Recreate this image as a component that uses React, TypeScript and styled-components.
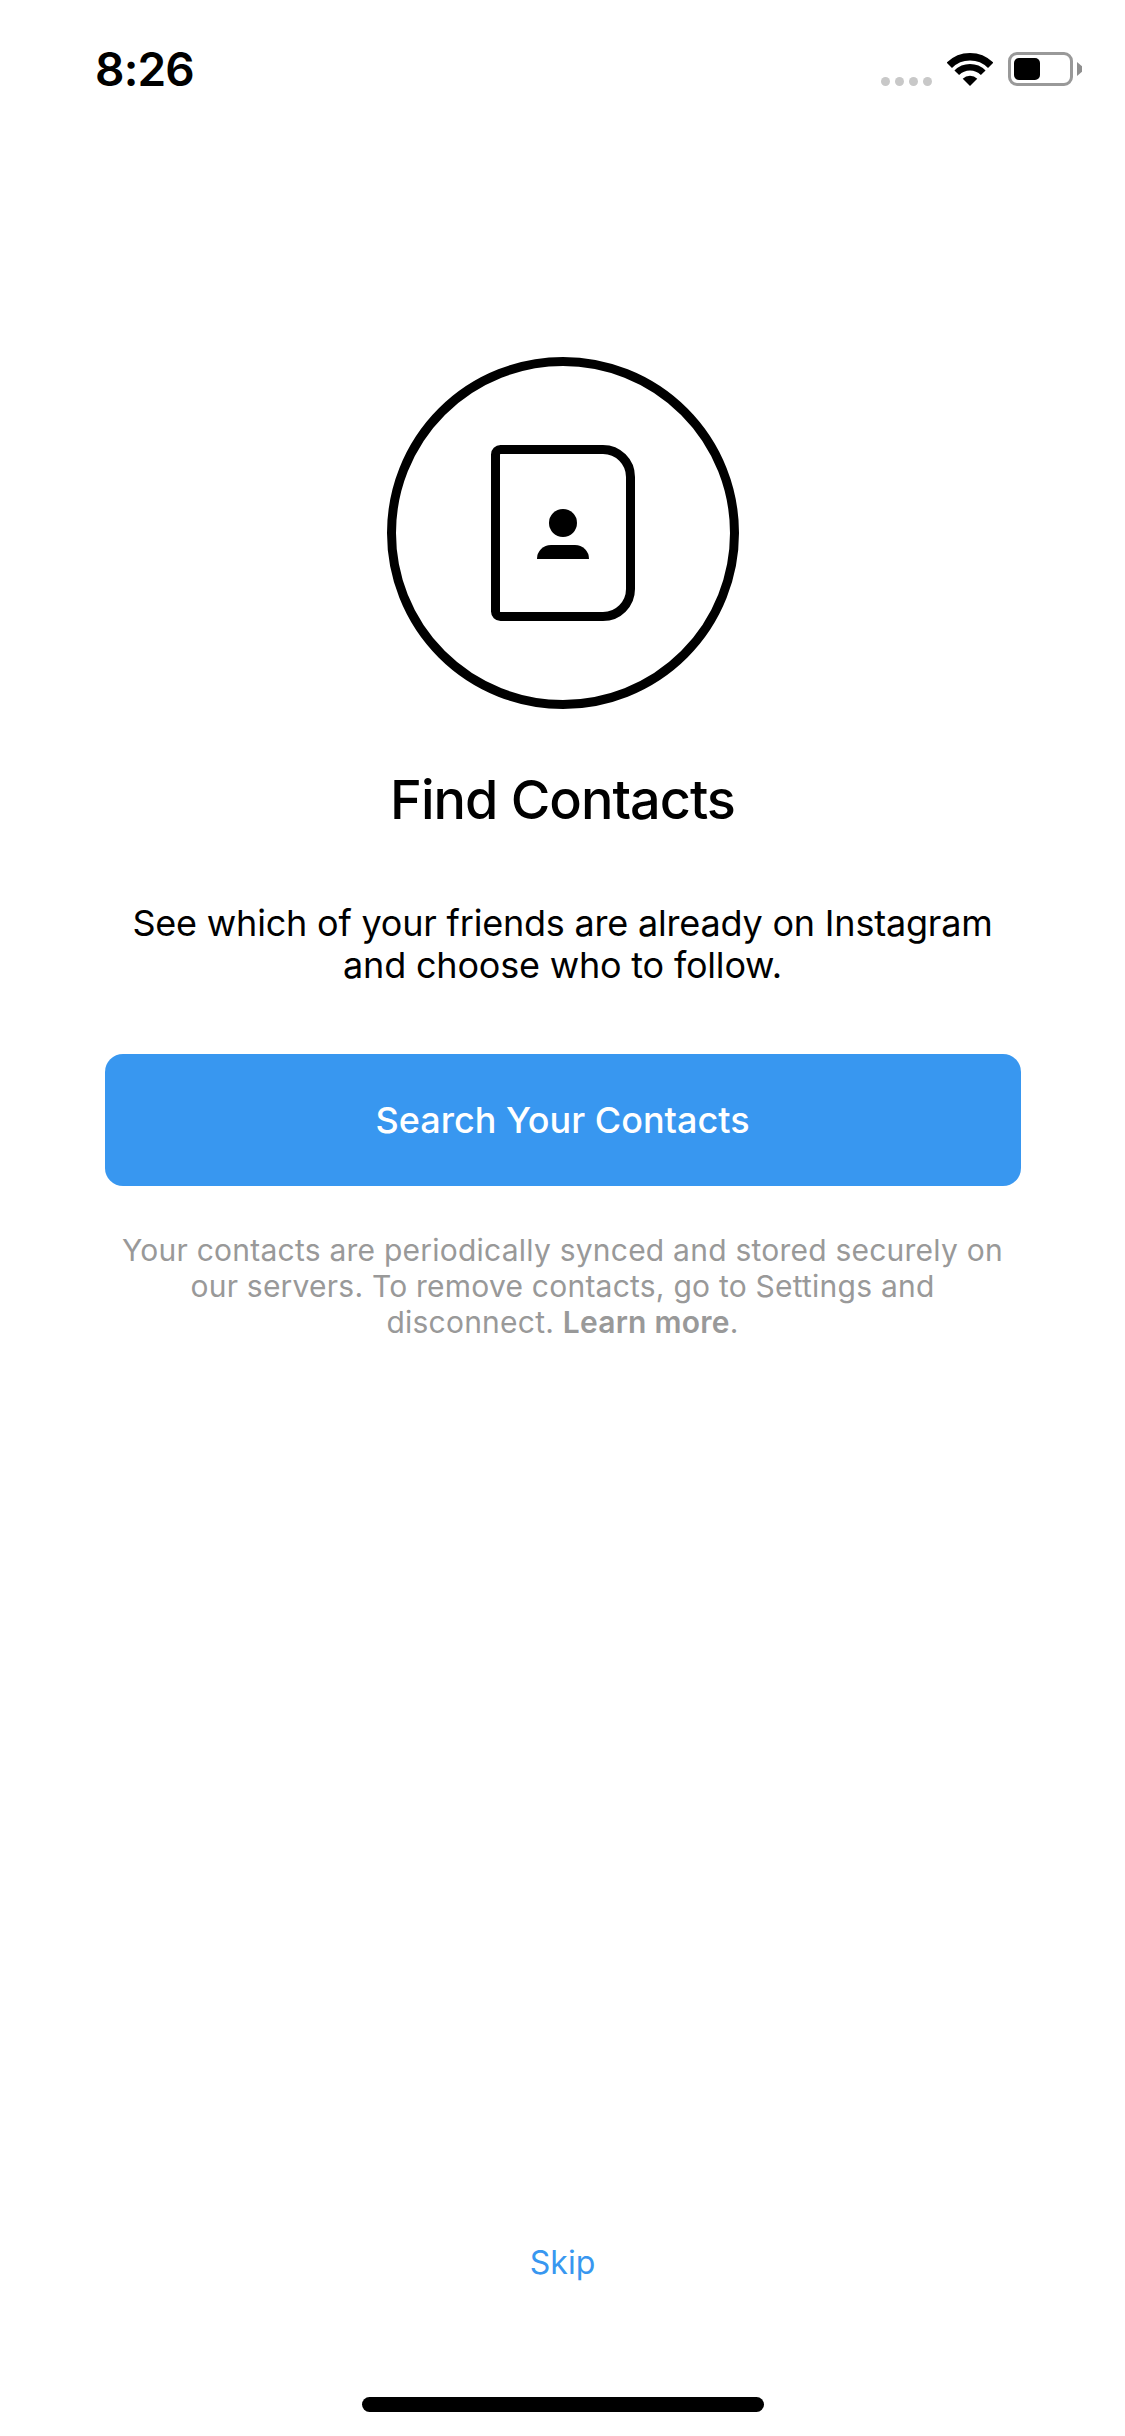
import styled, { createGlobalStyle } from 'styled-components'

const GlobalStyle = createGlobalStyle`
  html,
  body {
    margin: 0;
    padding: 0;
    background: #fff;
  }
`

const StyledPage = styled.div`
  width: 1125px;
  height: 2436px;
  display: flex;
  flex-direction: column;
  align-items: center;
  overflow: hidden;
  background: #fff;
  color: #000;
  font-family: Inter, 'Liberation Sans', sans-serif;
`

const StyledStatusBar = styled.div`
  align-self: stretch;
  height: 86px;
  box-sizing: border-box;
  padding: 52px 44px 0 95px;
  display: flex;
  justify-content: space-between;
`

const StyledTime = styled.div`
  font-size: 46px;
  line-height: 34px;
  font-weight: 600;
  letter-spacing: -0.8px;
`

const StyledStatusIcons = styled.div`
  display: flex;
  align-items: flex-end;
  height: 34px;
`

const StyledSignalDots = styled.div`
  display: flex;
  gap: 5px;
  margin-right: 15px;
`

const StyledDot = styled.span`
  width: 9px;
  height: 9px;
  border-radius: 50%;
  background: #c8c8c8;
`

const StyledBattery = styled.div`
  position: relative;
  width: 65px;
  height: 34px;
  margin: 0 8px 0 15px;
  box-sizing: border-box;
  padding: 3px;
  border: 3px solid #999;
  border-radius: 9px;

  &::after {
    content: '';
    position: absolute;
    top: 7px;
    right: -12px;
    width: 5px;
    height: 14px;
    background: #8e8e8e;
    clip-path: polygon(0 0, 100% 30%, 100% 70%, 0 100%);
  }
`

const StyledBatteryLevel = styled.div`
  width: 26px;
  height: 22px;
  border-radius: 5px;
  background: #000;
`

const StyledIconCircle = styled.div`
  width: 352px;
  height: 352px;
  margin-top: 271px;
  box-sizing: border-box;
  border: 9px solid #000;
  border-radius: 50%;
  display: flex;
  align-items: center;
  justify-content: center;
`

const StyledTitle = styled.h1`
  margin: 59px 0 0;
  font-size: 54px;
  line-height: 64px;
  font-weight: 500;
  letter-spacing: -1px;
`

const StyledDescription = styled.p`
  margin: 70px 0 0;
  font-size: 36px;
  line-height: 42px;
  letter-spacing: -0.2px;
  text-align: center;
`

const StyledSearchButton = styled.button`
  width: 916px;
  height: 132px;
  margin-top: 68px;
  border: 0;
  border-radius: 18px;
  background: #3897f0;
  color: #fff;
  font: 500 36px Inter, 'Liberation Sans', sans-serif;
`

const StyledNotice = styled.p`
  margin: 46px 0 0;
  font-size: 30px;
  line-height: 36px;
  letter-spacing: 0.23px;
  text-align: center;
  color: #999;

  b {
    font-weight: 600;
  }
`

const StyledSkip = styled.a`
  margin-top: auto;
  font-size: 32px;
  line-height: 36px;
  color: #3897f0;
`

const StyledHomeIndicator = styled.div`
  width: 402px;
  height: 15px;
  margin: 116px 0 24px;
  border-radius: 8px;
  background: #000;
`

const WifiIcon = () => (
  <svg width="46" height="33" viewBox="0 0 46 33" fill="none">
    <path d="M2.32 12.32A29.25 29.25 0 0 1 43.68 12.32" stroke="#000" strokeWidth="7.5" />
    <path d="M9.78 19.78A18.7 18.7 0 0 1 36.22 19.78" stroke="#000" strokeWidth="6.6" />
    <path d="M23 33L15.72 25.72A10.3 10.3 0 0 1 30.28 25.72Z" fill="#000" />
  </svg>
)

const ContactBookIcon = () => (
  <svg width="144" height="176" viewBox="0 0 144 176" fill="none">
    <path
      d="M9.5 4.5H112A27.5 27.5 0 0 1 139.5 32V144A27.5 27.5 0 0 1 112 171.5H9.5A5 5 0 0 1 4.5 166.5V9.5A5 5 0 0 1 9.5 4.5Z"
      stroke="#000"
      strokeWidth="9"
    />
    <circle cx="72" cy="78" r="14" fill="#000" />
    <path d="M46 114A14 14 0 0 1 60 100H84A14 14 0 0 1 98 114Z" fill="#000" />
  </svg>
)

export default function App() {
  return (
    <StyledPage>
      <GlobalStyle />
      <StyledStatusBar>
        <StyledTime>8:26</StyledTime>
        <StyledStatusIcons>
          <StyledSignalDots>
            <StyledDot />
            <StyledDot />
            <StyledDot />
            <StyledDot />
          </StyledSignalDots>
          <WifiIcon />
          <StyledBattery>
            <StyledBatteryLevel />
          </StyledBattery>
        </StyledStatusIcons>
      </StyledStatusBar>

      <StyledIconCircle>
        <ContactBookIcon />
      </StyledIconCircle>
      <StyledTitle>Find Contacts</StyledTitle>
      <StyledDescription>
        See which of your friends are already on Instagram
        <br />
        and choose who to follow.
      </StyledDescription>
      <StyledSearchButton>Search Your Contacts</StyledSearchButton>
      <StyledNotice>
        Your contacts are periodically synced and stored securely on
        <br />
        our servers. To remove contacts, go to Settings and
        <br />
        disconnect. <b>Learn more</b>.
      </StyledNotice>

      <StyledSkip>Skip</StyledSkip>
      <StyledHomeIndicator />
    </StyledPage>
  )
}
